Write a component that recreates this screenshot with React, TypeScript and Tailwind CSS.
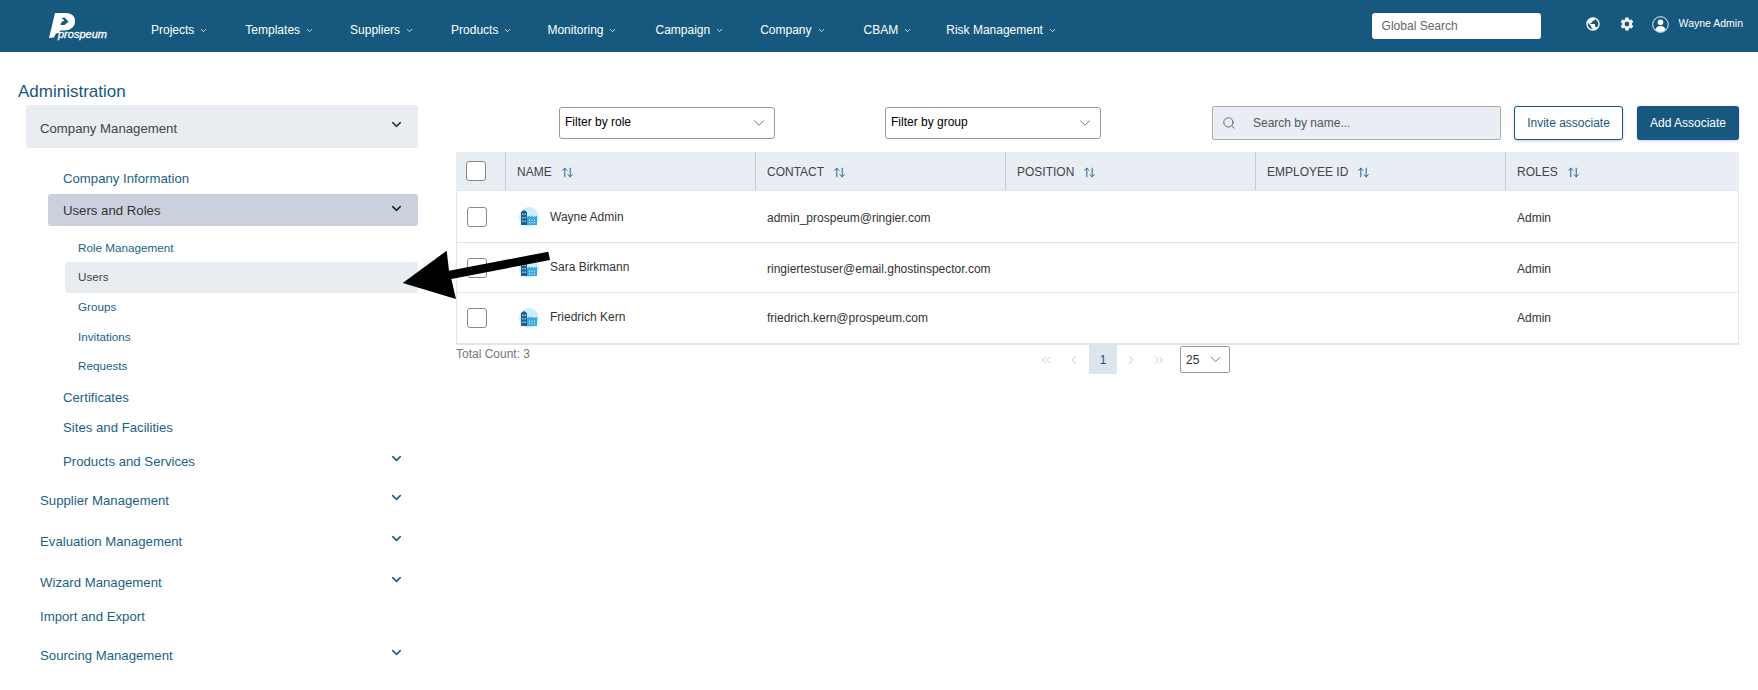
import { ArrowUpDown, ChevronDown, ChevronLeft, ChevronRight, ChevronsLeft, ChevronsRight, Search } from "lucide-react";
import { MdPublic, MdSettings } from "react-icons/md";

const navItems = [
  { label: "Projects", className: "ml-[44px]" },
  { label: "Templates", className: "ml-[37px]" },
  { label: "Suppliers", className: "ml-[36px]" },
  { label: "Products", className: "ml-[37px]" },
  { label: "Monitoring", className: "ml-[35px]" },
  { label: "Campaign", className: "ml-[38px]" },
  { label: "Company", className: "ml-[36px]" },
  { label: "CBAM", className: "ml-[38px]" },
  { label: "Risk Management", className: "ml-[34px]" },
];

const users = [
  { name: "Wayne Admin", email: "admin_prospeum@ringier.com", rowClass: "h-[52px]", nudge: "mt-[3px]", nameNudge: "mt-0" },
  { name: "Sara Birkmann", email: "ringiertestuser@email.ghostinspector.com", rowClass: "h-[50px]", nudge: "mt-[2px]", nameNudge: "-mt-[1px]" },
  { name: "Friedrich Kern", email: "friedrich.kern@prospeum.com", rowClass: "h-[50px]", nudge: "mt-0", nameNudge: "-mt-[2px]" },
];

const columns = ["NAME", "CONTACT", "POSITION", "EMPLOYEE ID", "ROLES"];

const Logo = () => (
  <div className="relative w-[60px] h-[32px]">
    <svg width="30" height="30" viewBox="0 0 30 30" className="absolute left-0 top-[1px]">
      <path
        fill="#fff"
        fillRule="evenodd"
        d="M8 2 L19 2 C25 2 28.5 5.5 28 11 C27.5 16.5 23 19.5 17 19.5 L13 19.5 L12 22 L9 22.5 L7 26.5 L2 27 Z M14.5 7 L17.5 9.5 L14.5 11 L13.5 14 L17.5 14 L21.5 10.5 L17.5 6.5 Z"
      />
    </svg>
    <span className="absolute left-[11px] top-[17px] text-[11px] leading-[14px] italic text-white [-webkit-text-stroke:0.3px_white]">prospeum</span>
  </div>
);

const BuildingIcon = () => (
  <svg width="20" height="20" viewBox="0 0 20 20">
    <circle cx="10" cy="10" r="10" fill="#cdeefb" />
    <path fill="#1c5f92" d="M2 5 L5 3 L8 5 V18 H2 Z" />
    <path fill="#38a8e2" d="M8 10 L11 8.5 V10 L14 8.5 V10 L18 9 V18 H8 Z" />
    <path fill="#bfe6f8" d="M3.2 6.5h1.2v1.5h-1.2zM5.6 6.5h1.2v1.5h-1.2zM3.2 10h1.2v1.5h-1.2zM5.6 10h1.2v1.5h-1.2zM3.2 13.5h1.2v1.5h-1.2zM5.6 13.5h1.2v1.5h-1.2zM10 12.5h1v1.5h-1zM12.5 12.5h1v1.5h-1zM15 12.5h1v1.5h-1zM10 15h1v1.5h-1zM12.5 15h1v1.5h-1zM15 15h1v1.5h-1z" />
  </svg>
);

const UserIcon = () => (
  <svg width="17" height="17" viewBox="0 0 17 17" fill="none">
    <circle cx="8.5" cy="8.5" r="7.8" stroke="#fff" strokeWidth="0.9" />
    <circle cx="8.5" cy="6.3" r="2.8" fill="#fff" />
    <path fill="#fff" d="M3.4 13.6 C4.2 11 6 10 8.5 10 C11 10 12.8 11 13.6 13.6 C12.2 15.2 10.5 16 8.5 16 C6.5 16 4.8 15.2 3.4 13.6 Z" />
  </svg>
);

const SideRow = ({ label, className, chevron }: { label: string; className: string; chevron?: boolean }) => (
  <div className={`flex items-center justify-between h-6 ${className}`}>
    <span className="mt-[2px] text-[13.2px] text-[#1c5f86]">{label}</span>
    {chevron && <ChevronDown size={15} strokeWidth={2.4} className="text-[#17597e] mr-[14px] -mt-[5px]" />}
  </div>
);

const FilterSelect = ({ label, className }: { label: string; className: string }) => (
  <div className={`flex items-center justify-between w-[216px] h-[32px] pl-[5px] pr-[6px] border border-[#999] rounded-[3px] bg-white text-[12px] text-black ${className}`}>
    <span className="-mt-[2px]">{label}</span>
    <ChevronDown size={18} strokeWidth={1} className="text-[#444]" />
  </div>
);

export default function App() {
  return (
    <div className="relative w-[1758px] h-[690px] overflow-hidden bg-white font-['Liberation_Sans',Arial,sans-serif]">
      <header className="flex items-center h-[52px] bg-[#17597e] pl-[47px] text-white">
        <Logo />
        {navItems.map((item) => (
          <div key={item.label} className={`flex items-center gap-[5px] mt-[8px] text-[12px] whitespace-nowrap ${item.className}`}>
            <span>{item.label}</span>
            <ChevronDown size={9} strokeWidth={2} />
          </div>
        ))}
        <div className="ml-auto flex items-center">
          <div className="flex items-center w-[169px] h-[26px] pl-[10px] bg-white rounded-[3px] text-[12px] text-[#666]">Global Search</div>
          <MdPublic size={16} className="ml-[44px] -mt-[4px]" />
          <MdSettings size={16} className="ml-[18px] -mt-[4px]" />
          <div className="ml-[17px] -mt-[4px]"><UserIcon /></div>
          <span className="ml-[10px] mr-[15px] -mt-[4px] text-[10.5px]">Wayne Admin</span>
        </div>
      </header>

      <div className="flex">
        <aside className="w-[456px] shrink-0 pl-[26px] pr-[38px]">
          <h2 className="-ml-[8px] mt-[28px] mb-[1px] h-6 text-[17px] leading-6 text-[#17597e]">Administration</h2>
          <div className="flex items-center justify-between h-[43px] pl-[14px] pr-[14px] rounded-[3px] bg-[#e9ecf0] text-[13.2px] text-[#444]">
            <span className="mt-[4px]">Company Management</span>
            <ChevronDown size={15} strokeWidth={2.4} className="text-[#333] -mt-[4px]" />
          </div>

          <SideRow label="Company Information" className="ml-[37px] mt-[18px]" />

          <div className="ml-[22px] mt-[4px] flex items-center justify-between h-[32px] pl-[15px] pr-[14px] rounded-[3px] bg-[#cad1dd] text-[13.2px] text-[#333]">
            <span className="mt-[2px]">Users and Roles</span>
            <ChevronDown size={15} strokeWidth={2.4} className="text-[#222] -mt-[4px]" />
          </div>

          <div className="ml-[52px] mt-[10px] h-6 flex items-center text-[11.7px] text-[#1c5f86]">Role Management</div>
          <div className="ml-[39px] mt-[2px] flex items-center h-[31px] pl-[13px] rounded-[3px] bg-[#e9ecf0] text-[11.7px] text-[#444]"><span className="-mt-[2px]">Users</span></div>
          <div className="ml-[52px] mt-[2px] h-6 flex items-center text-[11.7px] text-[#1c5f86]">Groups</div>
          <div className="ml-[52px] mt-[6px] h-6 flex items-center text-[11.7px] text-[#1c5f86]">Invitations</div>
          <div className="ml-[52px] mt-[5px] h-6 flex items-center text-[11.7px] text-[#1c5f86]">Requests</div>

          <SideRow label="Certificates" className="ml-[37px] mt-[7px]" />
          <SideRow label="Sites and Facilities" className="ml-[37px] mt-[6px]" />
          <SideRow label="Products and Services" className="ml-[37px] mt-[10px]" chevron />
          <SideRow label="Supplier Management" className="ml-[14px] mt-[15px]" chevron />
          <SideRow label="Evaluation Management" className="ml-[14px] mt-[17px]" chevron />
          <SideRow label="Wizard Management" className="ml-[14px] mt-[17px]" chevron />
          <SideRow label="Import and Export" className="ml-[14px] mt-[10px]" />
          <SideRow label="Sourcing Management" className="ml-[14px] mt-[15px]" chevron />
        </aside>

        <main className="w-[1283px] pt-[54px]">
          <div className="flex items-center h-[34px]">
            <FilterSelect label="Filter by role" className="ml-[103px]" />
            <FilterSelect label="Filter by group" className="ml-[110px]" />
            <div className="flex items-center w-[289px] h-[34px] ml-[111px] pl-[9px] border border-[#aaa] rounded-[2px] bg-[#e9edf4] text-[12px] text-[#555]">
              <Search size={14} strokeWidth={1.3} className="text-[#444]" />
              <span className="ml-[17px]">Search by name...</span>
            </div>
            <button className="w-[109px] h-[34px] ml-[13px] border border-[#17597e] rounded-[3px] bg-white text-[12px] text-[#17597e] shadow-[0_1px_3px_#c9c9f5]">Invite associate</button>
            <button className="w-[102px] h-[34px] ml-[14px] rounded-[3px] bg-[#17597e] text-[12px] text-white shadow-[0_1px_3px_#c9c9f5]">Add Associate</button>
          </div>

          <div className="mt-[12px] border-b-2 border-[#dfe5ec]">
            <div className="flex h-[39px] bg-[#e9edf4] text-[12px] text-[#444] border-b border-[#dfe5ec]">
              <div className="flex items-center shrink-0 w-[50px] pl-[10px] border-r border-[#c9cdd2]">
                <span className="w-[20px] h-[20px] border border-[#888] rounded-[3px] bg-white" />
              </div>
              {columns.map((col, i) => (
                <div key={col} className={`flex items-center shrink-0 pl-[11px] ${i < 4 ? "w-[250px] border-r border-[#c9cdd2]" : "w-[233px]"}`}>
                  <span className="mt-[2px]">{col}</span>
                  <ArrowUpDown size={13} strokeWidth={1.7} className="ml-[9px] mt-[2px] text-[#17597e]" />
                </div>
              ))}
            </div>
            {users.map((user, i) => (
              <div key={user.name} className={`flex items-center text-[12px] text-[#333] border-x border-[#dfe5ec] ${i < 2 ? "border-b" : ""} ${user.rowClass}`}>
                <div className="shrink-0 w-[48px] pl-[10px]">
                  <span className="block w-[20px] h-[20px] border border-[#888] rounded-[3px] bg-white" />
                </div>
                <div className="flex items-center shrink-0 w-[251px] pl-[14px]">
                  <BuildingIcon />
                  <span className={`ml-[11px] ${user.nameNudge}`}>{user.name}</span>
                </div>
                <span className={`shrink-0 w-[750px] pl-[11px] ${user.nudge}`}>{user.email}</span>
                <span className={`pl-[11px] ${user.nudge}`}>Admin</span>
              </div>
            ))}
          </div>

          <div className="flex items-start">
            <span className="w-[576px] text-[12px] text-[#777]">Total Count: 3</span>
            <div className="flex items-center h-[29px] text-[#999]">
              <div className="flex items-center justify-center w-[28px] h-[29px]"><ChevronsLeft size={14} strokeWidth={1} /></div>
              <div className="flex items-center justify-center w-[28px] h-[29px]"><ChevronLeft size={14} strokeWidth={1} /></div>
              <div className="flex items-center justify-center w-[28px] h-[29px] ml-[1px] bg-[#dce4ee] text-[12px] text-[#17597e]">1</div>
              <div className="flex items-center justify-center w-[28px] h-[29px]"><ChevronRight size={14} strokeWidth={1} /></div>
              <div className="flex items-center justify-center w-[28px] h-[29px]"><ChevronsRight size={14} strokeWidth={1} /></div>
              <div className="flex items-center justify-between w-[50px] h-[27px] ml-[7px] pl-[5px] pr-[5px] border border-[#999] rounded-[2px] text-[12px] text-[#333]">
                <span>25</span>
                <ChevronDown size={17} strokeWidth={1} className="text-[#444]" />
              </div>
            </div>
          </div>
        </main>
      </div>

      <svg className="absolute left-0 top-0 pointer-events-none" width="1758" height="690">
        <polygon fill="#000" points="402.7,283 446.7,250.7 449,270.7 548.3,251.7 550,260 451.3,279 456,299" />
      </svg>
    </div>
  );
}
